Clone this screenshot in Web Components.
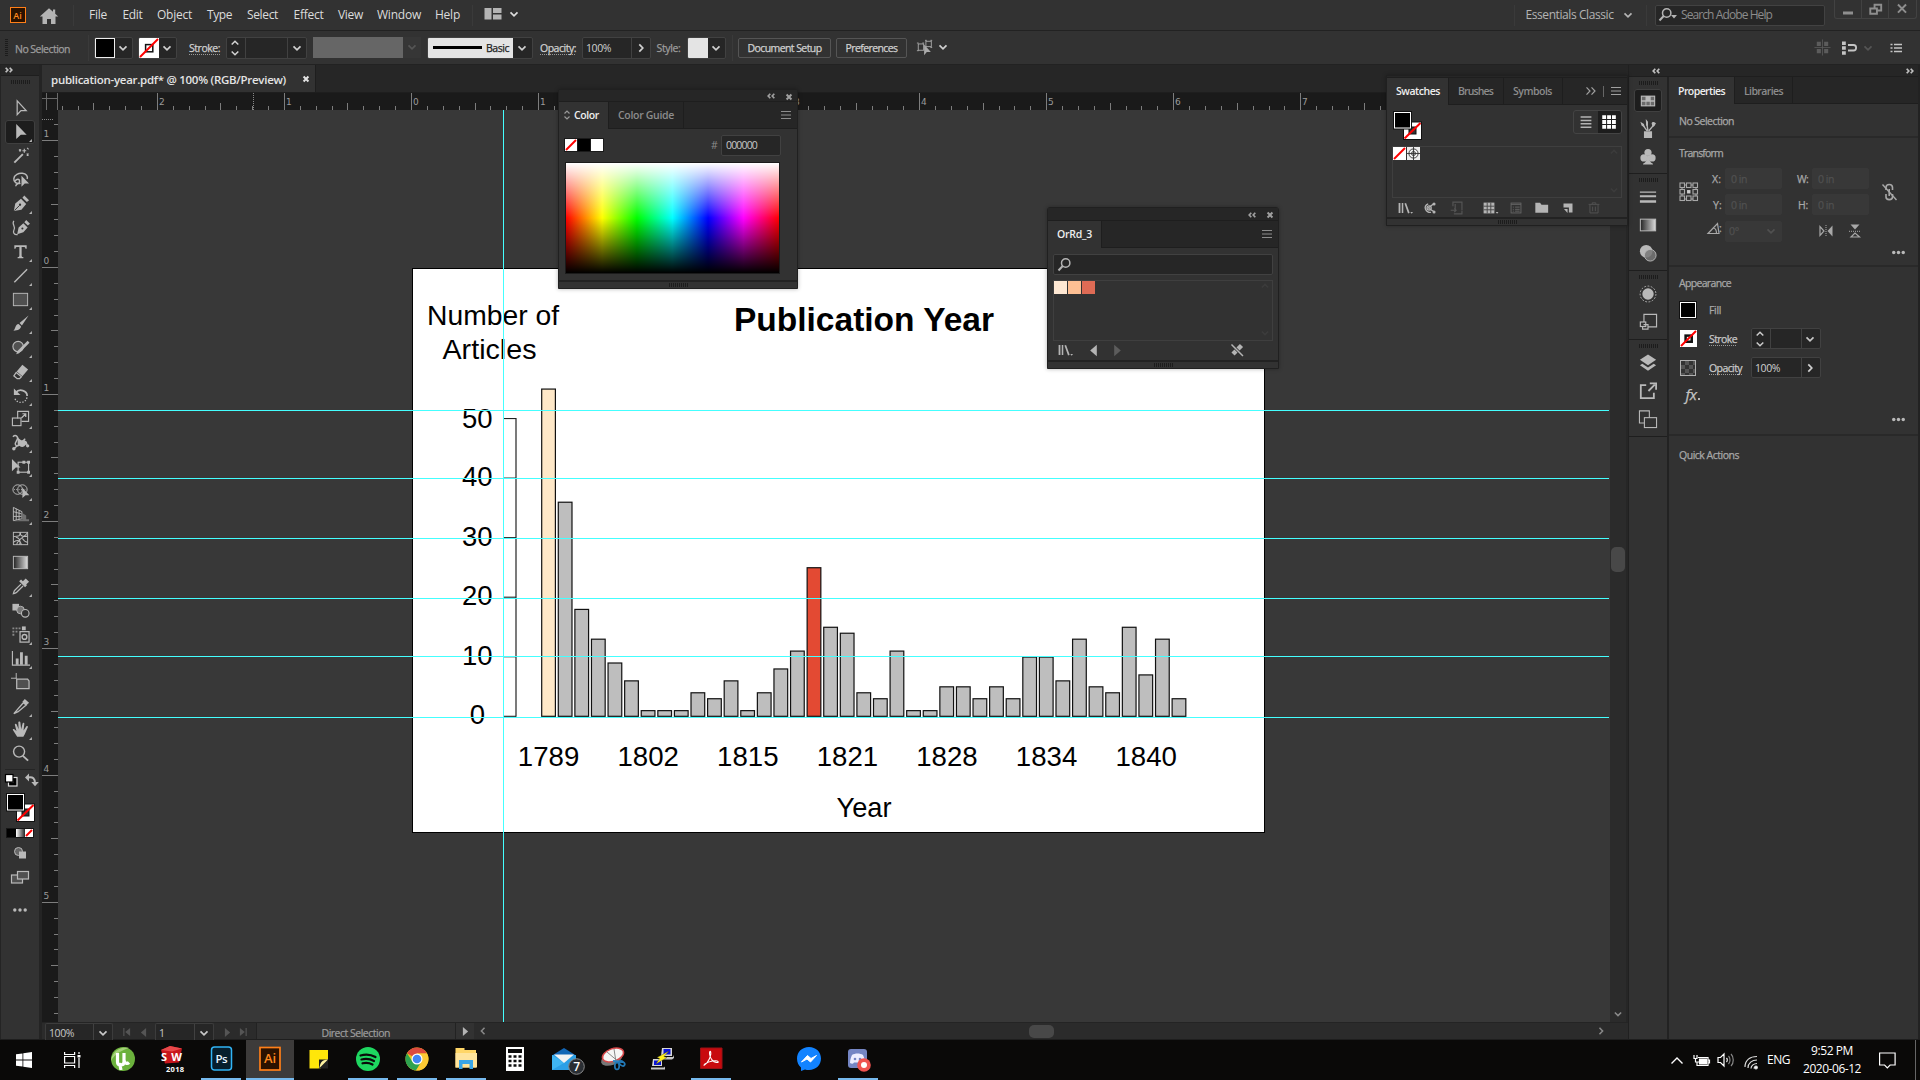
<!DOCTYPE html>
<html lang="en">
<head>
<meta charset="utf-8">
<title>publication-year.pdf</title>
<style>
html,body{margin:0;padding:0;background:#323232;overflow:hidden}
body{width:1920px;height:1080px;font-family:"Open Sans","Noto Sans",sans-serif;font-size:10.5px;color:#b4b4b4}
</style>
</head>
<body>
<ai-app></ai-app>
<script>
const BASE = `*{box-sizing:border-box}
.row{display:flex;align-items:stretch}
.col{display:flex;flex-direction:column}
.c{display:flex;align-items:center;min-width:0;flex:none}
.v{display:flex;flex:none;min-height:0}
svg{display:block;overflow:visible}`;

// A row of cells: each cell runs from its own start to the next cell's start.
const cells = (start, items, end) => {
  const first = items[0][0] - start;
  return `<div class="row" style="flex:1;padding-left:${first}px">` + items.map((it, i) => {
    const next = i + 1 < items.length ? items[i + 1][0] : (end || it[0] + 60);
    return `<div class="c" style="width:${next - it[0]}px;${it[2] || ''}">${it[1]}</div>`;
  }).join('') + '</div>';
};
// The same idea, top to bottom.
const stack = (start, items, end) =>
  `<div class="col" style="flex:1;padding-top:${items[0][0] - start}px">` + items.map((it, i) => {
    const next = i + 1 < items.length ? items[i + 1][0] : (end || it[0] + 30);
    return `<div class="v" style="height:${next - it[0]}px;${it[2] || ''}">${it[1]}</div>`;
  }).join('') + '</div>';

const define = (name, css, html) => customElements.define(name, class extends HTMLElement {
  connectedCallback() {
    if (this.shadowRoot) return;
    this.attachShadow({ mode: 'open' }).innerHTML =
      `<style>${BASE}${css}</style>` + (typeof html === 'function' ? html(this) : html);
  }
});

// Text label fitted to a given width through letter spacing.
customElements.define('ui-label', class extends HTMLElement {
  connectedCallback() {
    if (this.shadowRoot) return;
    this.attachShadow({ mode: 'open' }).innerHTML =
      `<style>:host{display:inline-block;white-space:pre;line-height:14px;height:14px;flex:none}
       :host([dotted]){background:repeating-linear-gradient(90deg,#999 0 1px,transparent 1px 2px) 0 100%/100% 1px no-repeat}
       :host([b]){font-weight:600}</style><span><slot></slot></span>`;
    const w = +this.getAttribute('w');
    if (w) {
      const s = this.shadowRoot.querySelector('span');
      const nat = s.getBoundingClientRect().width;
      s.style.letterSpacing = ((w - nat) / this.textContent.length) + 'px';
      this.style.width = w + 'px';
    }
  }
});
const L = (t, w, style = '', attr = '') => `<ui-label w="${w}" ${attr} style="${style}">${t}</ui-label>`;

const ST = 'fill="none" stroke="currentColor"';
const F = 'fill="currentColor"';
const CORNER = '<path d="M22 21v-3l-3 3z" fill="currentColor"/>';
const ICONS = {
  select: `<path d="M6.5 3v14.5l4-4.2h5.5z" ${ST} stroke-width="1.3"/>`,
  direct: `<path d="M5.5 2v16l4.8-4.6h6.2z" ${F}/>${CORNER}`,
  wand: `<path d="M3.5 17.5L12.5 8.5" ${ST} stroke-width="2"/><path d="M14 3v4M12 5h4M8.500 3.500l2 2M10.500 3.500l-2 2M16.500 8l2 2M18.500 8l-2 2M17 2l1.500 1.500" ${ST} stroke-width="1.200"/>`,
  lasso: `<path d="M10 14c-4 1-7.500-1-7-5 .5-4 5-6 9-5.500 4 .5 6 3 5 6M4 12c2-3 5-3 5 0s-4 2-4 5" ${ST} stroke-width="1.500"/><path d="M11 6v11.500l3.500-3.300h4.500z" ${F}/>`,
  pen: `<path d="M3 18l1.500-8 6-5 5.500 5.500-5 6zM12 4l2-2.500 5 5-2.300 2z" ${F}/><path d="M3.500 17.500l5.500-5.500" stroke="#323232" fill="none"/><circle cx="9.500" cy="11.300" r="1.200" fill="#323232"/>${CORNER}`,
  curve: `<path d="M6.500 17l1.500-7 5-4.500 4.500 4.500-4.500 5zM14 4.500l2-2.500 4 4-2.300 2z" ${F}/><path d="M3 3c-3 4 3 6 0 10-1 2 0 5 4 4.500" ${ST} stroke-width="1.300"/><circle cx="12" cy="11" r="1.100" fill="#323232"/>`,
  type: `<path d="M3.500 3.500h13v3.700h-1.300c0-1.500-.5-2-2-2H11.200V14.500c0 1 .5 1.300 1.800 1.300v1.200H7v-1.200c1.300 0 1.800-.3 1.800-1.300V5.200H6.800c-1.500 0-2 .5-2 2H3.500z" ${F}/>${CORNER}`,
  line: `<path d="M3.500 17L17 3.500" ${ST} stroke-width="1.500"/>${CORNER}`,
  rect: `<rect x="2.500" y="3.500" width="15" height="13" fill="#505050" stroke="currentColor"/>${CORNER}`,
  brush: `<path d="M18.500 1.500L9 9.500l2.500 2.500zM8 10.500l2.500 2.500c0 3-3 4.500-8 4.500 2.500-1.500 1.500-6.500 5.500-7z" ${F}/>${CORNER}`,
  shaper: `<circle cx="7.500" cy="9" r="5.500" fill="#505050" stroke="currentColor" stroke-width="1.200"/><path d="M19.500 5L8.500 16l-3 1 1-3L17.500 3z" ${F}/>${CORNER}`,
  eraser: `<path d="M12 3l6 5-6 7-6-5z" ${F}/><path d="M5.500 11l5.500 4.500-2 2H6.500L3 14.500z" ${ST} stroke-width="1.300"/>${CORNER}`,
  rotate: `<path d="M5 7c4-5 12-2 12 3.500" ${ST} stroke-width="1.800"/><path d="M3 2.500v7h7z" ${F}/><path d="M16.800 12c-1 7-12 7-13 0" ${ST} stroke-width="1.300" stroke-dasharray="1.500 1.500"/>${CORNER}`,
  scale: `<path d="M7 10V2.500h11.500V13H11" ${ST} stroke-width="1.200"/><rect x="1.500" y="9.500" width="9" height="8" ${ST} stroke-width="1.200"/><path d="M11 9.500l4-4M12 5h3.500v3.500" ${ST} stroke-width="1.300"/>${CORNER}`,
  width: `<path d="M2 4c3-3 6 0 4.500 3S3 12 6 13.500 12 8 15 9s0 5 4 4.500M3 16.500L15 6" ${ST} stroke-width="1.500"/><path d="M7 4c2 3 4 5 7 3l3 4-3 3c-3 2-6-1-7-3z" ${F}/><circle cx="3" cy="16.500" r="1.800" ${F}/><circle cx="17.500" cy="13.500" r="1.700" ${F}/>${CORNER}`,
  free: `<path d="M1 2v13l4-4h5z" ${F}/><rect x="7.500" y="5.500" width="11" height="10.500" ${ST} stroke-width="1.200"/><path d="M6 14.500h3v3H6zM17 4h3v3h-3zM17 14.500h3v3h-3zM12 4h3v3h-3z" ${F}/>${CORNER}`,
  shapeb: `<circle cx="7" cy="9" r="5" ${ST}/><circle cx="12" cy="9" r="5" ${ST}/><path d="M3 9h13" ${ST} stroke-dasharray="1 1.500"/><path d="M12 7v11l3.300-3h4z" ${F}/>${CORNER}`,
  persp: `<path d="M2.500 2.500v14l9-2V7zM5.500 4v12M8.500 5.500V15M2.500 7l9 2.500M2.500 12l9 0" ${ST}/><path d="M11 8l5 3v4h-5zM13 15h6v2h-16z" fill="#707070"/>${CORNER}`,
  mesh: `<rect x="2.500" y="3.500" width="15" height="13" ${ST}/><path d="M2.500 8c5-1 7 1 7-4.500M2.500 14c6-5 9 2 8 2.500M10 3.500c-1 4 3 5 7.500 4M9 16.500c2-5-1-7-4-8M12 10c2 3 4 4 5.500 4M6 16.500c1-6 7-7 11-12" ${ST} stroke-width="1.100"/>`,
  grad: `<rect x="2.500" y="3.500" width="15" height="13" fill="url(#g)" stroke="currentColor"/>`,
  dropper: `<path d="M12.500 4.500l3-3 3.500 3.500-3 3 .8.800-2 2-6.200-6.200 2-2z" ${F}/><path d="M10.500 7.500L4 14c-1 1-1 2-1.500 3.500C4 17 5 17 6 16l6.700-6.500" ${ST} stroke-width="1.300"/>${CORNER}`,
  blend: `<path d="M1.500 3h7v7h-7z" ${F}/><circle cx="10" cy="9.500" r="4" fill="#777" stroke="currentColor"/><circle cx="15" cy="13" r="4" fill="#323232" stroke="currentColor" stroke-width="1.200"/>`,
  spray: `<path d="M1.500 2.500h2v2h-2zM4.800 2.500h2v2h-2zM8 2.500h2v2H8zM1.500 6h2v2h-2zM4.800 6h2v2h-2zM1.500 9.300h2v2h-2z" fill="#888"/><rect x="9.500" y="7" width="9.500" height="11" ${ST} stroke-width="1.300"/><path d="M11.500 1.500h4v4h-4z" ${F}/><circle cx="14.200" cy="12.500" r="2.500" ${ST} stroke-width="1.500"/>${CORNER}`,
  graph: `<path d="M1.500 2v15H20" ${ST} stroke-width="1.200"/><path d="M5 10h3v6.500H5zM9.500 3.500h3v13h-3zM14.500 7h3v9.500h-3z" ${F}/>${CORNER}`,
  artb: `<path d="M5.500 0v6M0 5.500h6" ${ST}/><path d="M6 6.500h11.500l1.500 2v8H6z" fill="#505050" stroke="currentColor" stroke-width="1.300"/>`,
  slice: `<path d="M3 17.500L13 6l3 2.500-8.500 7z" ${ST} stroke-width="1.400"/><path d="M12 5l2.500-3 4.500 4-2.700 2.800z" ${F}/>${CORNER}`,
  hand: `<path d="M6.500 17.500L2 10.500c-.5-1.300 1-1.500 2-.5l1.800 1.800L4 4.800c0-1.300 1.500-1.300 2 0l2 5-.3-7c0-1.500 2-1.500 2.200 0l.8 7 1.500-6c.3-1.300 2-1 1.800.3L13.200 11l3-4.300c.8-1 2 0 1.500 1L14.500 15l-1.500 2.500z" ${F}/>${CORNER}`,
  zoom: `<circle cx="8.500" cy="8" r="5.800" ${ST} stroke-width="1.500"/><path d="M12.500 12.500l5.500 5" ${ST} stroke-width="2"/>`,
  chev: `<path d="M6.500 8.300l3.500 3.500 3.500-3.500" ${ST} stroke-width="1.700"/>`,
  chevr: `<path d="M8.300 6.300l3.500 3.700-3.500 3.700" ${ST} stroke-width="1.700"/>`,
  spin: `<path d="M6.700 6.500L10 3.300l3.300 3.200M6.700 13.500l3.300 3.200 3.300-3.200" ${ST} stroke-width="1.600"/>`,
  dbll: `<path d="M9.300 7.700L7.200 10l2.100 2.300M13.300 7.700L11.200 10l2.100 2.300" ${ST} stroke-width="1.700"/>`,
  dblr: `<path d="M6.700 7.700L8.800 10l-2.100 2.300M10.700 7.700L12.800 10l-2.100 2.300" ${ST} stroke-width="1.700"/>`,
  dblbig: `<path d="M5.500 6.300L9 10l-3.500 3.700M10.500 6.300L14 10l-3.500 3.700" ${ST} stroke-width="1.200"/>`,
  close: `<path d="M7.300 7.300l5.400 5.400M12.700 7.300l-5.400 5.400" ${ST} stroke-width="2.200"/>`,
  menu: `<path d="M5 6.500h10M5 10h10M5 13.500h10" ${ST} stroke-width="1.200"/>`,
  home: `<path d="M10 2.200L.8 10.500h2.700V18H8v-5h4v5h4.500v-7.500h2.700l-3-2.800V3.500H14v2.300z" ${F}/>`,
  layout: `<path d="M1.500 4h7v11.500h-7zM10 4h8.500v5H10zM10 10.500h8.500v5H10z" ${F}/>`,
  search: `<circle cx="11.700" cy="8" r="4.200" ${ST} stroke-width="1.500"/><path d="M8.700 11L4.500 15.500" ${ST} stroke-width="2"/>`,
  isol: `<rect x="2.500" y="5.500" width="6" height="7" ${ST}/><rect x="11" y="2.500" width="6" height="6" ${ST}/><path d="M1 4.500h2M7 4.500h2M1 13h2M10 1.500h2M16 1.500h2M16 9.500h2" ${ST}/><path d="M9 6v12l3-3.500h4.500z" ${F}/>`,
  align4: `<path d="M4 4h4.300v4.300H4zM11.700 4H16v4.300h-4.300zM4 11.700h4.300V16H4zM11.700 11.700H16V16h-4.300z" ${F}/><path d="M10 1.500v17M1.500 10h17" ${ST} stroke-width=".8"/>`,
  snap: `<path d="M3 3.500h3.800v3.500H3zM3 8.300h3.800v3.500H3zM3 13.200h3.800v3.500H3z" ${F}/><path d="M9 7h5.500c3.500 0 3.500 5.500 0 5.500H9" ${ST} stroke-width="1.800"/>`,
  list: `<path d="M4.500 6.500h2M8 6.500h8M4.500 10h2M8 10h8M4.500 13.500h2M8 13.500h8" ${ST} stroke-width="1.300"/>`,
  swp: `<rect x="2" y="4" width="16" height="12" ${F}/><path d="M3.200 5.200h4v4h-4zM13 5.200h3.800v4H13zM3.200 10.700h4v4h-4zM8.200 10.700h3.800v4H8.200zM13 10.700h3.800v4H13z" fill="#6a6a6a"/>`,
  brushes: `<path d="M5.500 12.500h9v7.500h-9z" ${F}/><path d="M9 12L4.500 6M10 12L8.500 3M11 12l5-6" ${ST} stroke-width="1.500"/><path d="M1.500 2l4 2.500 1 3.500-3.500-1.500zM7.500-1l2.500 3v4.500h-2zM14 3.500c1-2 2.500-1 5 0-1 .5-1 4-4 4z" ${F}/>`,
  club: `<circle cx="10" cy="5" r="4" ${F}/><circle cx="5.500" cy="11" r="4" ${F}/><circle cx="14.500" cy="11" r="4" ${F}/><path d="M9 9h2.200c0 4 .8 7 4.300 8.500v.8H4.500v-.8C8 16 9 13 9 9z" ${F}/>`,
  strokes: `<path d="M1 4h18v1.200H1zM1 8h18v2.300H1zM1 13.500h18v3H1z" ${F}/>`,
  grads: `<rect x="1.500" y="3.500" width="17" height="13" fill="url(#g)" stroke="currentColor" stroke-width="1.100"/>`,
  transp: `<circle cx="8" cy="8" r="7" ${F}/><circle cx="12.500" cy="12.500" r="6.500" fill="#777" stroke="#b9b9b9" stroke-width="1" fill-opacity=".85"/>`,
  appear: `<circle cx="10" cy="10" r="6.300" ${F}/><circle cx="10" cy="10" r="8.800" ${ST} stroke-dasharray="2 1.700"/>`,
  gstyle: `<path d="M5.500 10V1.500h14v14H10" ${ST} stroke-width="1.300"/><rect x="1.500" y="10" width="6" height="5" fill="#323232" stroke="currentColor" stroke-width="1.300"/><path d="M5 13h5v5H4V15" ${ST} stroke-width="1.300"/>`,
  layers: `<path d="M10 .5l9 6-9 6-9-6z" ${F}/><path d="M1 12.500l9 6 9-6-2.700-1.700-6.300 4.200-6.300-4.200z" ${F}/>`,
  exp: `<path d="M8 3.500H2V18h14.500V12" ${ST} stroke-width="2"/><path d="M10.500 10l7-7M12 1.500h7v7" ${ST} stroke-width="2"/>`,
  artbs: `<path d="M6 14.500H.5V1h11v7.500" ${ST} stroke-width="1.200"/><rect x="6" y="8.500" width="13.500" height="11" ${ST} stroke-width="1.200"/>`,
  lib: `<path d="M4 4.500h2v11H4zM7.500 4.500h1.700v11H7.500zM10.500 5l1.800-.6 4 11-1.800.6z" ${F}/><path d="M17 14.500h3l-1.500 1.800z" ${F}/>`,
  kuler: `<path d="M8 10l6.500-5M8 10l7 4.500M8 5.500C5 6.500 4 9 5 11.500s4 4 6 3" ${ST} stroke-width="1.500"/><circle cx="9" cy="10" r="2.300" ${ST} stroke-width="1.500"/><circle cx="14.500" cy="5.500" r="1.700" ${F}/><circle cx="14.500" cy="14.500" r="1.700" ${F}/>`,
  addlib: `<path d="M5.500 8V3.500h10v9M8 12V5.500M3 12.500h6M7 10.500l2 2-2 2M6.500 16.500h9v-3.500" ${ST} stroke-width="1.300"/>`,
  kinds: `<path d="M4 4h12v12H4z" ${F}/><path d="M4 8h12M4 12h12M8 4v12M12 4v12" stroke="#444"/><path d="M17.500 14.500h3l-1.500 1.800z" ${F}/>`,
  opts: `<rect x="4.500" y="4.500" width="11" height="11" ${ST}/><path d="M4.500 6h11M6.500 9h1M9 9h5M6.500 11.500h1M9 11.500h5M6.500 13.500h1M9 13.500h5" ${ST}/>`,
  folder: `<path d="M3.500 5h5l1.500 2h7v8.500H3.500z" ${F}/>`,
  page: `<path d="M5 5h10v10h-4V9.500H5z" ${F}/><path d="M5.500 11H9.500v4.500z" ${F}/>`,
  trash: `<path d="M5.500 6.500v9h9v-9M4 6h12M8 5.500V4.300h4v1.200M8.500 8.500v5M11.500 8.500v5" ${ST}/>`,
  left: `<path d="M13.500 4v12L6.500 10z" ${F}/>`,
  right: `<path d="M6.500 4v12l7-6z" ${F}/>`,
  editx: `<path d="M6 14L14.500 5.500" ${ST} stroke-width="4.500"/><path d="M4.500 4.500l11.500 11.500" stroke="#323232" stroke-width="3"/><path d="M4.500 4.500l11.500 11.500" ${ST} stroke-width="1.500"/>`,
  refpt: `<path d="M3 3h14v14H3z" ${ST}/>` + [1.5, 8, 14.5].map(a => [1.5, 8, 14.5].map(b => `<rect x="${a - .5}" y="${b - .5}" width="4.500" height="4.500" fill="${a == 8 && b == 8 ? '#ccc' : '#323232'}" stroke="${a == 8 && b == 8 ? '#323232' : 'currentColor'}" stroke-width="1.100"/>`).join('')).join(''),
  link: `<path d="M7 8V5.500c0-4 6.500-4 6.500 0V8M7 12v3c0 3.500 6.500 3.500 6.500 0v-3M10.200 7v7" ${ST} stroke-width="1.600"/><path d="M3.500 2.500L17.500 18" ${ST} stroke-width="1.400"/>`,
  angle: `<path d="M3 15.500L12.500 5.500 14 15.500zM8 10c2.500 0 3.500 2.500 3.500 5.500" ${ST} stroke-width="1.200"/>`,
  fliph: `<path d="M4 5.500v9l4-4.500z" ${ST} stroke-width="1.200"/><path d="M16.500 4.500v11L11.500 10z" ${F}/><path d="M10 4v12" ${ST} stroke-dasharray="1 1"/>`,
  flipv: `<path d="M5.500 3.500h9L10 8.500z" ${F}/><path d="M6 16h8.500L10 12z" ${ST} stroke-width="1.200"/><path d="M4 10.300h12" ${ST} stroke-dasharray="1 1"/>`,
  dots: `<circle cx="5" cy="10" r="1.800" ${F}/><circle cx="10" cy="10" r="1.800" ${F}/><circle cx="15" cy="10" r="1.800" ${F}/>`,
  dotsw: `<circle cx="4.800" cy="10" r="1.700" ${F}/><circle cx="10" cy="10" r="1.700" ${F}/><circle cx="15.200" cy="10" r="1.700" ${F}/>`,
  updown: `<path d="M7.500 8.500L10 6l2.500 2.500M7.500 11.500L10 14l2.500-2.500" ${ST} stroke-width="1.200"/>`,
  deffs: `<rect x="7.500" y="7.500" width="8.500" height="8.500" fill="#000" stroke="#ddd" stroke-width="1.200"/><rect x="10.500" y="10.500" width="2.500" height="2.500" fill="#323232"/><rect x="4.500" y="4.500" width="7.500" height="7.500" fill="#fff" stroke="#000" stroke-width="1.200"/>`,
  swapfs: `<path d="M7 7.500c5-1 7 1 7 6" ${ST} stroke-width="2"/><path d="M8 3.500v8L4 7.500zM10.300 12h7.500L14 16.300z" ${F}/>`,
  drawm: `<circle cx="8.500" cy="8.500" r="4" fill="#666" stroke="currentColor"/><path d="M9 8.500h7v7H9z" ${F}/>`,
  screenm: `<rect x="1.500" y="8" width="11" height="8" fill="#505050" stroke="currentColor" stroke-width="1.200"/><rect x="7.500" y="4.500" width="11" height="7.500" fill="#505050" stroke="currentColor" stroke-width="1.200"/>`,
  viewl: `<path d="M4 4.500h12M4 8.300h12M4 12h12M4 15.800h12" ${ST} stroke-width="1.600"/>`,
  viewg: `<path d="M2.500 2.500h4.300v4.300H2.500zM7.900 2.500h4.300v4.300H7.900zM13.300 2.500h4.300v4.300h-4.300zM2.500 7.900h4.300v4.300H2.500zM7.900 7.900h4.300v4.300H7.900zM13.300 7.900h4.300v4.300h-4.300zM2.500 13.300h4.300v4.300H2.500zM7.900 13.300h4.300v4.300H7.900zM13.300 13.300h4.300v4.300h-4.300z" fill="#fff"/>`,
  min: `<path d="M5 11.500h10v3H5z" ${F}/>`,
  restore: `<path d="M9 9V5h7v6h-4M4.500 9h7v5.500h-7z" ${ST} stroke-width="2"/>`,
  wclose: `<path d="M5.500 5l9 9M14.500 5l-9 9" ${ST} stroke-width="2.200"/>`,
  first: `<path d="M6.500 5.500v9" ${ST} stroke-width="1.300"/><path d="M13.500 5.500v9L8 10z" ${F}/>`,
  last: `<path d="M13.500 5.500v9" ${ST} stroke-width="1.300"/><path d="M6.500 5.500v9L12 10z" ${F}/>`,
};
define('ui-icon', ':host{display:block;flex:none}', el => {
  const s = el.getAttribute('s') || 20;
  return `<svg width="${s}" height="${s}" viewBox="0 0 20 20"><defs><linearGradient id="g"><stop offset="0" stop-color="#222"/><stop offset="1" stop-color="#ddd"/></linearGradient></defs>${ICONS[el.getAttribute('n')]}</svg>`;
});
const I = (n, style = '', s = 20) => `<ui-icon n="${n}" s="${s}" style="${style}"></ui-icon>`;

define('ui-grip', ':host{display:block;width:19px;height:4px;background:repeating-linear-gradient(90deg,#1c1c1c 0 1px,transparent 1px 2px);flex:none}', '');
define('ui-sep', ':host{display:block;width:1px;height:21px;background:#242424;border-right:1px solid #3a3a3a;box-sizing:content-box;flex:none}', '');

// Overlapping fill and stroke indicators
define('fill-stroke', ':host{display:block;flex:none}', `<svg width="29" height="29" viewBox="0 0 29 29">
<rect x="10" y="10.500" width="19" height="18.500" fill="#111"/><rect x="11" y="11.500" width="17" height="16.500" fill="#fff"/><rect x="16" y="16" width="7" height="7" fill="#323232" stroke="#111"/><path d="M11.500 27.500L27.500 12" stroke="#f00" stroke-width="2"/>
<rect x="0" y="0" width="19" height="18.500" fill="#111"/><rect x="1" y="1" width="17" height="16.500" fill="#fff"/><rect x="2" y="2" width="15" height="14.500" fill="#000"/></svg>`);
define('none-swatch', ':host{display:block;flex:none}', el => {
  const s = +el.getAttribute('s') || 13, ring = el.hasAttribute('ring');
  return `<svg width="${s}" height="${s}" viewBox="0 0 ${s} ${s}"><rect width="${s}" height="${s}" fill="#fff"/>${ring ? `<rect x="${s * .33}" y="${s * .33}" width="${s * .36}" height="${s * .36}" fill="#fff" stroke="#111" stroke-width="${el.getAttribute('ring') || 1}"/>` : ''}<path d="M1 ${s - 1}L${s - 1} 1" stroke="#f00" stroke-width="2"/></svg>`;
});
define('ui-field', `:host{display:flex;align-items:center;height:22px;background:#262626;border:1px solid #414141;border-radius:2px;overflow:hidden;flex:none;box-sizing:border-box}
:host([dim]){background:#383838;border-color:#383838;color:#505050}`, '<slot></slot>');

define('menu-bar', `:host{display:flex;height:30px;background:#323232;border-bottom:0;font-size:12px;color:#dcdcdc}
.ai{width:16px;height:16px;border:1.500px solid #ff7f18;background:#2a1200;color:#ff8a1e;font-size:9px;font-weight:600;display:flex;align-items:center;justify-content:center}
.wb{display:flex;width:83px;height:19px;border:1px solid #424242;border-top:0;border-radius:0 0 3px 3px;align-self:flex-start;color:#8e8e8e}
.wb div{flex:1;display:flex;justify-content:center;border-left:1px solid #424242}.wb div:first-child{border:0}
.s{background:#262626;border:1px solid #424242;border-radius:2px;width:170px;height:21px;display:flex;align-items:center;color:#8c8c8c}`,
cells(0, [[9.500, '<div class="ai">Ai</div>'], [39, I('home', 'color:#b4b4b4;margin-top:2px', 20)], [73, '<ui-sep></ui-sep>'],
[89, L('File', 18)], [122.500, L('Edit', 20)], [157, L('Object', 35)], [207, L('Type', 25)], [247, L('Select', 31)], [293.500, L('Effect', 30)], [338, L('View', 25)], [377, L('Window', 44)], [435, L('Help', 25)],
[472, '<ui-sep></ui-sep>'], [482.500, I('layout', 'color:#b4b4b4;margin-top:-2px')], [503.500, I('chev', 'margin-top:-2px')],
[1514, '<ui-sep></ui-sep>'], [1525.500, L('Essentials Classic', 88, 'color:#b4b4b4')], [1618, I('chev', 'color:#b4b4b4')], [1646, '<ui-sep></ui-sep>'],
[1655, `<div class="s">${I('search', 'margin-left:-1px;color:#b4b4b4')}<svg width="6" height="4" style="margin:3px 1px 0 -4px"><path d="M0 0h6L3 3.500z" fill="#b4b4b4"/></svg>${L('Search Adobe Help', 91, 'margin-left:3px')}</div>`],
[1833.500, `<div class="wb"><div>${I('min')}</div><div>${I('restore', 'margin-left:1px', 19)}</div><div>${I('wclose', '', 18)}</div></div>`]], 1920));

define('control-bar', `:host{display:flex;height:35px;background:#323232;border-top:1px solid #222;border-bottom:1px solid #222;font-size:10.500px;color:#d0d0d0;-webkit-text-stroke:.25px}
.g{width:3px;height:18px;background:repeating-linear-gradient(#1c1c1c 0 1px,transparent 1px 2px)}
.k{width:20px;height:20px;border:1px solid #eee;background:#000;flex:none}.w{width:20px;height:20px;background:#e4e4e4;flex:none}
.d{width:1px;align-self:stretch;background:#414141;flex:none}
.b{border:1px solid #555;border-radius:2px;height:20px;display:flex;align-items:center;justify-content:center}
`,
cells(0, [[5, '<div class="g"></div>'], [15, L('No Selection', 55, 'color:#9d9d9d;margin-top:2px')], [88, '<ui-sep style="height:26px"></ui-sep>'],
[94, `<ui-field style="width:39px"><div class="k"></div>${I('chev', 'margin-left:-2px')}</ui-field>`],
[138, `<ui-field style="width:39px"><none-swatch s="20" ring="1.5"></none-swatch>${I('chev', 'margin-left:-2px')}</ui-field>`],
[189, L('Stroke:', 31, 'margin-top:1px', 'dotted')],
[226, `<ui-field style="width:81px">${I('spin', 'margin-left:-2px')}<div class="d"></div><div style="flex:1"></div><div class="d"></div>${I('chev', 'margin:0 -1px')}</ui-field>`],
[313, '<div style="width:90px;height:21px;background:#666"></div>'], [403, `<div style="width:18px;height:21px;background:#363636;color:#555">${I('chev', 'margin-left:-1px')}</div>`],
[427, `<ui-field style="width:106px"><div style="width:86px;height:20px;background:#e4e4e4;color:#222;display:flex;align-items:center;padding-left:5px"><div style="width:49px;height:2.500px;background:#000;margin-right:4px"></div>${L('Basic', 23, 'margin-top:1px')}</div>${I('chev', 'margin-left:-1px')}</ui-field>`],
[540, L('Opacity:', 36, '', 'dotted')],
[582, `<ui-field style="width:69px">${L('100%', 25, 'margin-left:3px;-webkit-text-stroke:0')}<div style="flex:1"></div><div class="d"></div>${I('chevr', 'margin:0 -1px')}</ui-field>`],
[656.500, L('Style:', 24, 'color:#9d9d9d')],
[687, `<ui-field style="width:39px"><div class="w"></div>${I('chev', 'margin-left:-2px')}</ui-field>`], [732, '<ui-sep style="height:26px"></ui-sep>'],
[738, `<div class="b" style="width:93px">${L('Document Setup', 74, 'margin-top:1px')}</div>`], [836, `<div class="b" style="width:71px">${L('Preferences', 52, 'margin-top:1px')}</div>`],
[916, I('isol', 'color:#aaa', 18)], [933, I('chev', 'margin-top:-1px')],
[1813, I('align4', 'color:#5c5c5c', 19)], [1839, I('snap', 'color:#c4c4c4')], [1858, I('chev', 'color:#555')], [1886, I('list', 'color:#c4c4c4')]], 1920));

const TOOLS = 'select direct wand lasso pen curve type line rect brush shaper eraser rotate scale width free shapeb persp mesh grad dropper blend spray graph artb slice hand zoom'.split(' ');
define('tool-rail', `:host{display:flex;flex-direction:column;width:42px;height:974px;background:#323232;border-left:1px solid #242424;border-right:3px solid #242424;color:#b9b9b9;align-items:center}
.h{height:11px;align-self:stretch;background:#262626;border-bottom:1px solid #1e1e1e;display:flex;align-items:center}
.t{height:23.930px;width:30px;flex:none;display:flex;align-items:center;justify-content:center;border-radius:3px}
.on{background:#1d1d1d;box-shadow:inset 0 0 0 1px #3f3f3f}`,
`<div class="h">${I('dblr', 'margin-left:-2px;color:#c0c0c0')}</div><ui-grip style="margin:4px 0 12px"></ui-grip>` +
TOOLS.map((t, i) => `<div class="t${i == 1 ? ' on' : ''}">${I(t, '', 19)}</div>`).join('') +
`<div style="width:30px;height:1px;background:#252525;margin-top:3px;flex:none"></div>
<div class="row" style="height:21px;gap:0;align-items:center;justify-content:space-between;width:38px">${I('deffs')}${I('swapfs', 'margin-right:-1px')}</div>
<fill-stroke style="margin-top:2px"></fill-stroke>
<div class="row" style="margin-top:6px;border:1px solid #161616;flex:none"><div style="width:9px;height:8px;background:#000"></div><div style="width:9px;height:8px;background:linear-gradient(90deg,#fff,#222)"></div><none-swatch s="8"></none-swatch></div>
<div style="margin-top:5px">${I('drawm')}</div><div style="margin-top:4px">${I('screenm')}</div><div style="margin-top:13px">${I('dotsw')}</div>`);

const RULE = '#7d7d7d';
const hr = () => {
  let s = '';
  for (let k = -24; k <= 62; k++) {
    const x = Math.floor(411.5 + k * 15.88 - 58) + .5, n = Math.abs(k / 8);
    if (x < 0 || x > 1567) continue;
    s += `<path d="M${x} ${k % 8 == 0 ? 0 : k % 4 == 0 ? 10 : 13}V17" stroke="${RULE}"/>`;
    if (k % 8 == 0) s += `<text x="${x + 1.5}" y="11.500">${n}</text>`;
  }
  return s;
};
const vr = () => {
  let s = '';
  for (let k = -9; k <= 47; k++) {
    const y = Math.floor(267.5 + k * 15.87 - 110) + .5;
    if (y < 0 || y > 912) continue;
    s += `<path d="M${k % 8 == 0 ? 0 : k % 4 == 0 ? 9 : 12} ${y}H16" stroke="${RULE}"/>`;
    if (k % 8 == 0) s += `<text x="1.500" y="${y - 3.5}">${Math.abs(k / 8)}</text>`;
  }
  return s;
};
const DATA = [55,36,18,13,9,6,1,1,1,4,3,6,1,4,8,11,25,15,14,4,3,11,1,1,5,5,3,5,3,10,10,6,13,5,4,15,7,13,3];
define('bar-chart', ':host{display:block}text{font-family:"Liberation Sans",Arial,sans-serif;fill:#000}', () => {
  const Y0 = 716.3, U = 5.955;
  const T = (x, y, w, t, fs, extra = '') => `<text x="${x}" y="${y}" text-anchor="middle" font-size="${fs}" ${w ? `textLength="${w}" lengthAdjust="spacingAndGlyphs"` : ''} ${extra}>${t}</text>`;
  let s = '<rect x="412.500" y="268.500" width="852" height="564" fill="#fff" stroke="#000"/>';
  s += T(493, 325, 132, 'Number of', 28.5) + T(489.5, 358.6, 94, 'Articles', 28.5) + T(864, 330.7, 260, 'Publication Year', 33.5, 'font-weight="700"');
  [[50, 428], [40, 486], [30, 546], [20, 604.5], [10, 664.5], [0, 724]].forEach(([n, y]) => {
    s += T(477.3, y, 0, n, 27.5);
    s += `<path d="M503 ${Y0 - n * U}H516" stroke="#222" stroke-width="1.100"/>`;
  });
  s += `<path d="M516 ${Y0 - 50 * U - .5}V${Y0 + .5}" stroke="#222" stroke-width="1.200"/>`;
  DATA.forEach((v, i) => {
    s += `<rect x="${541.7 + i * 16.59}" y="${Y0 - v * U + .3}" width="13.700" height="${v * U - .3}" fill="${i == 0 ? '#fee8c8' : i == 16 ? '#e34a33' : '#bebebe'}" stroke="#111" stroke-width="1.200"/>`;
  });
  [1789, 1802, 1815, 1821, 1828, 1834, 1840].forEach((n, i) => s += T(548.6 + i * 99.6, 766, 61.5, n, 27.5));
  s += T(864, 817, 55, 'Year', 28);
  [410, 478, 538, 598, 656, 717].forEach(y => s += `<rect x="58" y="${y}" width="1551" height="1" fill="#4ff"/>`);
  s += '<rect x="503" y="110" width="1" height="912" fill="#4ff"/>';
  return `<svg width="1552" height="913" viewBox="58 110 1552 913">${s}</svg>`;
});

define('doc-window', `:host{display:flex;flex-direction:column;width:1586px;height:974px;background:#262626}
.tabs{height:28px;display:flex;border-bottom:1px solid #1e1e1e}
.tab{width:274px;background:#323232;display:flex;align-items:center;padding-left:9px;color:#e4e4e4;font-size:11.500px;border-right:1px solid #1e1e1e}
.rul{background:#1a1a1a}
text{font-family:"DejaVu Sans",sans-serif;font-size:9px;fill:#9a9a9a}
.st{height:17px;background:#2b2b2b;display:flex;color:#c8c8c8;border-top:1px solid #242424}
.f{background:#262626;border:1px solid #3c3c3c;border-bottom:0;display:flex;align-items:center;height:17px;border-radius:2px 2px 0 0}
.d{width:1px;align-self:stretch;background:#414141}`,
`<div class="tabs"><div class="tab">${L('publication-year.pdf* @ 100% (RGB/Preview)', 235, 'margin-top:2px', 'b')}${I('close', 'margin:1px 0 0 11px', 18)}</div></div>
<div class="row rul" style="height:17px"><svg width="16" height="17"><path d="M4.500 0v17M0 5.500h16M15.500 0v17" stroke="#6a6a6a"/></svg><svg width="1568" height="17">${hr()}<path d="M195.500 0v17" stroke="#888" stroke-dasharray="1 1"/></svg></div>
<div class="row" style="height:912px"><svg class="rul" width="16" height="912">${vr()}<path d="M0 9.500h12" stroke="#888" stroke-dasharray="1 1"/></svg>
<bar-chart style="background:#383838;height:912px;width:1552px;overflow:hidden"></bar-chart>
<div class="col" style="width:16px;background:#2b2b2b;align-items:center;justify-content:space-between"><div style="width:14px;height:25px;border-radius:5px;background:#484848;margin-top:437px"></div>${I('chev', 'color:#8a8a8a;margin-bottom:-1px', 18)}</div></div>
<div class="st">` + cells(42, [[45, `<div class="f" style="width:68px">${L('100%', 25, 'margin:3px 0 0 3px')}<div style="flex:1"></div><div class="d"></div>${I('chev', 'margin:2px -1px 0')}</div>`],
[118, I('first', 'color:#555;margin-top:2px', 18)], [136, I('left', 'color:#555;margin-top:2px', 15)],
[155, `<div class="f" style="width:59px">${L('1', 5, 'margin:3px 0 0 3px')}<div style="flex:1"></div><div class="d"></div>${I('chev', 'margin:2px -1px 0')}</div>`],
[219.500, I('right', 'color:#555;margin-top:2px', 15)], [234, I('last', 'color:#555;margin-top:2px', 18)],
[256, L('Direct Selection', 68.5, 'margin:3px 0 0 64.500px;color:#9d9d9d;-webkit-text-stroke:.2px'), 'background:#323232;border-left:1px solid #222'],
[455, I('right', 'color:#b4b4b4;margin:1px 0 0 2px', 15), 'background:#323232;border-left:1px solid #222'], [474, I('chevr', 'color:#888;transform:scaleX(-1)', 18)],
[1029, '<div style="width:25px;height:13px;border-radius:5px;background:#484848"></div>'], [1592, I('chevr', 'color:#888', 18)]], 1628) + '</div>');

define('icon-strip', `:host{display:flex;flex-direction:column;width:41px;height:974px;background:#323232;border-left:1px solid #202020;border-right:2px solid #222;color:#b9b9b9;align-items:stretch}
.h{height:12px;background:#262626;border-bottom:1px solid #1e1e1e;display:flex;align-items:center;justify-content:flex-end;flex:none;margin-right:-2px}
.g{display:flex;flex-direction:column;align-items:center;border-bottom:1px solid #1e1e1e;padding-top:4px;flex:none}
.i{height:28px;width:28px;display:flex;align-items:center;justify-content:center;flex:none}
.on{background:#1d1d1d;box-shadow:inset 0 0 0 1px #404040;border-radius:3px;height:23px;margin:2px 0 3px}`,
`<div class="h">${I('dbll', 'margin-right:3px;color:#c0c0c0')}</div>` +
[[['swp', 'brushes', 'club'], 97], [['strokes', 'grads', 'transp'], 97], [['appear', 'gstyle'], 69], [['layers', 'exp', 'artbs'], 97]].map(([a, h], gi) =>
`<div class="g" style="height:${h}px"><ui-grip style="margin-bottom:${gi ? 1 : 2}px"></ui-grip>${a.map(n => `<div class="i${n == 'swp' ? ' on' : ''}">${I(n, '', 18)}</div>`).join('')}</div>`).join(''));

define('props-panel', `:host{display:flex;flex-direction:column;width:251px;height:974px;background:#323232;border-right:2px solid #222;color:#a8a8a8;font-size:10.500px;-webkit-text-stroke:.25px}
.h{height:12px;background:#262626;border-bottom:1px solid #1e1e1e;display:flex;align-items:center;justify-content:flex-end;flex:none}
.tabs{height:27px;display:flex;background:#262626;flex:none}
.tab{display:flex;align-items:center;border-right:1px solid #1e1e1e;border-bottom:1px solid #1e1e1e;color:#8c8c8c;-webkit-text-stroke:0}
.tab.on{background:#323232;color:#eee;border-bottom:0}
hr{border:0;height:2px;background:#292929;margin:0;flex:1}
.d{width:1px;align-self:stretch;background:#414141;flex:none}`,
`<div class="h">${I('dblr', 'margin-right:-2px;color:#c0c0c0')}</div><div class="tabs"><div class="tab on" style="width:66px;padding-left:9px">${L('Properties', 47, 'margin-top:1px', 'b')}</div><div class="tab" style="width:58px;padding-left:9px">${L('Libraries', 39, 'margin-top:1px', 'b')}</div><div style="flex:1;border-bottom:1px solid #1e1e1e"></div></div>` +
stack(104, [[114, L('No Selection', 55, 'margin-left:10px')], [136, '<hr>'], [146, L('Transform', 44, 'margin-left:10px')],
[168, cells(1669, [[1712, L('X:', 9)], [1725, '<ui-field dim style="width:57px;height:21px">' + L('0 in', 16, 'margin-left:5px') + '</ui-field>'], [1797, L('W:', 11)], [1812, '<ui-field dim style="width:57px;height:21px">' + L('0 in', 16, 'margin-left:5px') + '</ui-field>']], 1880), 'height:21px;margin-bottom:-3px'],
[186, cells(1669, [[1679, I('refpt')], [1879, I('link')]], 1915), 'height:12px;margin-bottom:-4px'],
[194, cells(1669, [[1713, L('Y:', 9)], [1725, '<ui-field dim style="width:57px;height:21px">' + L('0 in', 16, 'margin-left:5px') + '</ui-field>'], [1798, L('H:', 10)], [1812, '<ui-field dim style="width:57px;height:21px">' + L('0 in', 16, 'margin-left:5px') + '</ui-field>']], 1880), 'height:21px;margin-bottom:5px'],
[220, cells(1669, [[1705, I('angle', 'margin-top:-6px')], [1719, L(':', 3, 'margin-top:-6px')], [1725, '<ui-field dim style="width:57px;height:21px">' + L('0°', 10, 'margin-left:3px') + I('chev', 'margin-left:22px') + '</ui-field>'], [1815.5, I('fliph')], [1844.5, I('flipv')]], 1880), 'height:22px;margin-bottom:0'],
[242, I('dots', 'margin:1px 0 0 219.500px;color:#b9b9b9', 19)], [265, '<hr>'], [276, L('Appearance', 52, 'margin-left:10px')],
[301, '<div style="margin-left:10px;width:18px;height:18px;background:#000;border:1px solid #111;box-shadow:inset 0 0 0 1px #fff"></div>' + L('Fill', 12, 'margin:2px 0 0 12px')],
[328, cells(1669, [[1679.5, '<none-swatch s="17" ring="2.5"></none-swatch>'], [1709, L('Stroke', 28, 'color:#c8c8c8', 'dotted')], [1751, `<ui-field style="width:70px;height:21px;color:#c8c8c8">${I('spin', 'margin-left:-2px')}<div class="d"></div><div style="flex:1"></div><div class="d"></div>${I('chev', 'margin:0 0 0 -2px')}</ui-field>`]], 1880), 'height:21px;margin-bottom:8px'],
[357, cells(1669, [[1680, '<div style="width:16px;height:16px;border:1px solid #b0b0b0;background:repeating-conic-gradient(#555 0 25%,#333 0 50%) 0 0/8px 8px"></div>'], [1709, L('Opacity', 33, 'color:#c8c8c8', 'dotted')], [1751, `<ui-field style="width:70px;height:21px;color:#d0d0d0">${L('100%', 25, 'margin-left:3px;-webkit-text-stroke:0')}<div style="flex:1"></div><div class="d"></div>${I('chevr', 'margin:0 0 0 -2px')}</ui-field>`]], 1880), 'height:21px;margin-bottom:8px'],
[386, L('fx', 11, "margin-left:16.500px;font:italic 15px/16px 'Open Sans';color:#c4c4c4") + '<div style="width:2px;height:2px;background:#bbb;margin:12px 0 0 1px"></div>'],
[410, I('dots', 'margin-left:219.500px;color:#b9b9b9', 19)], [434, '<hr>'], [448, L('Quick Actions', 60, 'margin-left:10px')]]));

// Free-floating palette; tabs and body are passed in by slot.
define('float-panel', `:host{display:flex;flex-direction:column;position:absolute;background:#323232;border:1px solid #202020;box-shadow:0 0 4px rgba(0,0,0,.3);color:#8c8c8c;box-sizing:border-box;border-radius:3px 3px 0 0}
.h{background:#262626;display:flex;align-items:center;justify-content:flex-end;flex:none;border-bottom:1px solid #1e1e1e;overflow:hidden;color:#a0a0a0}
.tabs{height:27px;display:flex;flex:none;background:#262626;border-bottom:1px solid #1e1e1e}
.body{flex:1;display:flex;flex-direction:column;min-height:0}
.foot{height:8px;border-top:2px solid #222;display:flex;justify-content:center;align-items:center;flex:none}`,
el => `<div class="h" style="height:${el.getAttribute('h')}px">${el.hasAttribute('plain') ? '' : I('dbll', 'margin-top:1px') + I('close', 'margin:2px -1px 0 -1px', 18)}</div><div class="tabs"><slot name="tabs"></slot></div><div class="body"><slot></slot></div><div class="foot"><ui-grip></ui-grip></div>`);
define('panel-tab', `:host{display:flex;align-items:center;border-right:1px solid #1e1e1e;height:26px;box-sizing:border-box;color:#8c8c8c;flex:none}:host([on]){background:#323232;color:#eee;height:27px;padding-bottom:1px}`, '<slot></slot>');
define('list-box', `:host{display:flex;border:1px solid #3f3f3f;box-sizing:border-box;align-items:flex-start;gap:1px;flex:none;color:#3c3c3c}.a{margin-left:auto;align-self:stretch;display:flex;flex-direction:column;justify-content:space-between;margin-right:-2px}`, `<slot></slot><div class="a">${I('chev', 'transform:scaleY(-1);margin-top:-4px', 18)}${I('chev', 'margin-bottom:-2px', 18)}</div>`);

define('color-body', `:host{display:flex;flex-direction:column;padding-left:6px}
.sp{width:215px;height:112px;border:1px solid #1b1b1b;margin-left:-.5px;background:linear-gradient(#fff,rgba(255,255,255,0) 50%,rgba(0,0,0,0) 50%,#000),linear-gradient(90deg,#f00,#ff0 17%,#0f0 33.300%,#0ff 50%,#00f 66.700%,#f0f 83.300%,#f00)}
.sw{display:flex;border:1px solid #1a1a1a;height:14px;gap:1px;background:#1a1a1a;margin-left:-1px}`,
`<div class="row" style="height:33px;align-items:center;padding-bottom:1px"><div class="sw"><none-swatch s="12"></none-swatch><div style="width:12px;background:#000"></div><div style="width:12px;background:#fff"></div></div><div style="margin-left:107px;width:10px">${L('#', 7)}</div><ui-field style="width:60px;height:21px;color:#c8c8c8">${L('000000', 31, 'margin-left:4px')}</ui-field></div><div class="sp"></div>`);
define('library-body', ':host{display:flex;flex-direction:column;padding:6px 5px 0;color:#b4b4b4}',
`<ui-field style="height:21px;width:220px">${I('search', 'margin-left:0')}</ui-field>
<list-box style="height:61px;width:220px;margin-top:5px"><div style="width:13px;height:13px;background:#fee8d3"></div><div style="width:13px;height:13px;background:#fdbf93"></div><div style="width:13px;height:13px;background:#de6b55"></div></list-box>
<div class="row" style="height:18px;flex:none">` + cells(1053, [[1055, I('lib', '', 18)], [1083.5, I('left', '', 19)], [1108, I('right', 'color:#5c5c5c', 19)], [1226.5, I('editx', '', 20)]], 1260) + '</div>');
define('swatches-body', `:host{display:flex;flex-direction:column;padding:6px 5px 0;color:#b4b4b4}
.vb{display:flex;width:49px;height:24px;border:1px solid #444;border-radius:3px;overflow:hidden;margin-top:-1px}.vb div{flex:1;display:flex;align-items:center;justify-content:center}.vb div+div{background:#1d1d1d}`,
`<div class="row" style="justify-content:space-between;height:35px;width:230px;align-items:flex-start"><fill-stroke style="margin-left:.5px"></fill-stroke><div class="vb"><div>${I('viewl', '', 18)}</div><div>${I('viewg', '', 18)}</div></div></div>
<list-box style="height:52px;width:230px"><none-swatch s="13"></none-swatch><svg width="13" height="13" style="background:#eee"><g fill="none" stroke="#333" stroke-width=".9"><circle cx="6.500" cy="6.500" r="4.600"/><circle cx="6.500" cy="6.500" r="2"/><path d="M6.500 0v13M0 6.500h13"/></g></svg></list-box>
<div class="row" style="height:19px;flex:none">` + cells(1392, [[1395, I('lib', '', 18)], [1421, I('kuler', '', 18)], [1448, I('addlib', 'color:#555', 18)], [1479.5, I('kinds', '', 18)], [1507, I('opts', 'color:#666', 18)], [1532, I('folder', '', 19)], [1559, I('page', '', 18)], [1584.5, I('trash', 'color:#555', 18)]], 1615) + '</div>');

const tile = svg => `<svg width="28" height="28" viewBox="0 0 28 28">${svg}</svg>`;
const APPS = [
  [`<ellipse cx="14" cy="14" rx="12" ry="12" fill="#6bb13c"/><path d="M2 16C3 6 12 1 20 3 14 5 6 8 2 16z" fill="#a5d27a"/><path d="M8.500 8v9c0 4 6.500 4 6.500 0V8M15 15c.5 4 3.500 4 5 2.500M10.500 18l1.500 7" fill="none" stroke="#fff" stroke-width="3.200"/>`, 0],
  [`<path d="M3 5l9-4 12 2.500-3 14-14 1z" fill="#c8161d"/><path d="M3 5l9-4 12 2.500-10 3z" fill="#e8484a"/><text x="3" y="16" font-size="11" font-weight="700" fill="#fff" textLength="21">SW</text><text x="8" y="27" font-size="7.500" font-weight="700" fill="#fff" textLength="18">2018</text>`, 0],
  [`<rect x="4.500" y="2" width="20" height="23" rx="3" fill="#061e2c" stroke="#31b4f5" stroke-width="1.500"/><text x="8.500" y="17.500" font-size="11.500" font-weight="600" fill="#eaf6ff" textLength="12">Ps</text>`, 1],
  [`<rect x="4" y="2.500" width="20" height="22.500" fill="#2a1200" stroke="#ff7f18" stroke-width="1.700"/><text x="8" y="18" font-size="13" fill="#ff8a1e" font-weight="600" textLength="12">Ai</text>`, 2],
  [`<path d="M4.500 5h18.500v11l-7.500 7.500h-11z" fill="#ffe60a"/><path d="M23 14v9.500h-9.500z" fill="#222"/><path d="M14 23.500v-9h9z" fill="#1a1a1a"/><path d="M14.500 23c.5-5 2-8 8.500-8.500z" fill="#fff3a0"/>`, 0],
  [`<circle cx="14" cy="14" r="12" fill="#1ed760"/><path d="M6.500 10.500c5-1.500 10.500-1 15 1.500M7.500 14.500c4-1 8.500-.7 12.500 1.500M8.500 18.300c3.500-.8 7-.5 10 1.200" fill="none" stroke="#0a0a0a" stroke-width="2.200" stroke-linecap="round"/>`, 1],
  [`<circle cx="14" cy="14" r="11.500" fill="#f0c419"/><path d="M14 14L4 8.200A11.500 11.500 0 0 1 24 8.500H14z" fill="#dd4b3e"/><path d="M4 8.200A11.500 11.500 0 0 0 13 25.500L18 17l-9-1z" fill="#2ea350"/><path d="M14 8.500h10A11.500 11.500 0 0 1 13 25.500l5.500-8z" fill="#fcc934"/><circle cx="14" cy="14" r="5.500" fill="#fff"/><circle cx="14" cy="14" r="4.300" fill="#4285f4"/>`, 1],
  [`<path d="M3.500 5V3h9v2H24v17.500H3.500z" fill="#ffd667"/><path d="M3.500 8H25v14.500H3.500z" fill="#ffe49c"/><path d="M7 24v-9h14v9h-3.500v-5h-7v5z" fill="#38a5e8"/>`, 1],
  [`<path d="M5 2h18v24H5z" fill="#fff"/><path d="M7 4h14v4H7z" fill="#0a0a0a"/><path d="M7.500 11.500h3M12.500 11.500h3M17.500 11.500h3M7.500 16h3M12.500 16h3M17.500 16h3M7.500 20.500h3M12.500 20.500h3M17.500 20.500h3" stroke="#0a0a0a" stroke-width="2.400"/>`, 0],
  [`<path d="M2 10.500L14 3l12 7.500z" fill="#1266b5"/><path d="M2 10h24v15H2z" fill="#2b9fe6"/><path d="M2 25V10l12 8z" fill="#3fb5f2"/><path d="M4 9.500h20L14 18z" fill="#f2f2f2"/><circle cx="26.500" cy="21.500" r="7.800" fill="#2a2e33" stroke="#888"/><text x="23.200" y="25.800" font-size="12" font-weight="600" fill="#fff">7</text>`, 0],
  [`<ellipse cx="12.500" cy="14" rx="11" ry="6" transform="rotate(-20 12.500 14)" fill="#777"/><ellipse cx="14" cy="10" rx="11" ry="6.300" transform="rotate(-20 14 10)" fill="#f5f5f5" stroke="#d8484a" stroke-width="1.500"/><path d="M8 7l13 11M15 4l2 13" stroke="#888" fill="none"/><path d="M14 16l10 1" stroke="#2a86c8" stroke-width="2"/><ellipse cx="18" cy="21" rx="2.200" ry="3.500" fill="none" stroke="#2278b5" stroke-width="1.700"/><ellipse cx="23" cy="18.500" rx="3" ry="2" transform="rotate(35 23 18.500)" fill="none" stroke="#2278b5" stroke-width="1.700"/>`, 0],
  [`<path d="M14 3h10v8H13zM5 14h9v7H4z" fill="#d8d8d8"/><path d="M15.500 4h7v5.500h-7zM6 15.500h7V20H6z" fill="#0a14d8"/><path d="M12 12h13l1-2v3l-2 1.500H12zM3 22.500h13l1-1v3H3z" fill="#c8c8c8"/><path d="M21 6l-5 5.500 3 1L8 19l3.500-5.500-2.500-1z" fill="#fff01e" stroke="#333" stroke-width=".4"/>`, 0],
  [`<path d="M3.500 3h21.500v20.500H3.500z" fill="#c80a0e" stroke="#9a1014"/><path d="M7.500 20c3-1.500 7.500-9.500 6-13.500-1.500-1-1.500 5 1.500 8.500 2.500 2.500 7 3.500 6 1.500-1-1.500-9-.5-13 2.500-1 1-1.500 1.300-.5 1z" fill="none" stroke="#fff" stroke-width="1.100"/>`, 1],
  ['', 0],
  [`<path d="M14 2c7 0 12 5 12 11.500S21 25 14 25c-1.500 0-3-.2-4-.6L6 26v-3.500C3.500 20.500 2 17.500 2 13.500 2 7 7 2 14 2z" fill="#1283ff"/><path d="M6.500 17l6-6.500 3.500 3 5.500-3-6 6.500-3.500-3z" fill="#fff" stroke="#fff"/>`, 0],
  [`<rect x="4" y="4" width="19" height="19" rx="3" fill="#7586c4"/><path d="M8 10c3-2 8-2 11 0 1 2 2 5 2 8-3 2-3 1-4-.5h-7C9 19 8 19 6 18c0-3 1-6 2-8z" fill="#eef"/><circle cx="11" cy="14" r="1.300" fill="#7586c4"/><circle cx="16" cy="14" r="1.300" fill="#7586c4"/><circle cx="20" cy="20" r="6.800" fill="#ef5350"/><circle cx="20" cy="20" r="3" fill="#fff"/>`, 1],
];
define('task-bar', `:host{display:flex;height:40px;background:#0a0908;color:#fff;font-size:12px;align-items:stretch}
.a{width:49px;display:flex;align-items:center;justify-content:center;flex:none;border-bottom:2px solid transparent}
.u{background:linear-gradient(#76b9ed,#76b9ed) 50% 38px/40px 2px no-repeat;background-origin:border-box;background-clip:border-box}
.on{background:linear-gradient(#76b9ed,#76b9ed) 0 38px/48px 2px no-repeat border-box,linear-gradient(#3d3b3a,#3d3b3a) 0 0/48px 40px no-repeat border-box}
text{font-family:"Open Sans",sans-serif}
.tm{display:flex;flex-direction:column;align-items:center;gap:4px;width:58px}`,
`<div class="a" style="width:48px"><svg width="16" height="16" fill="#fff" style="margin-top:1px"><path d="M0 2.300L6.500 1.400v6.200H0zM7.300 1.300L16 0v7.600H7.300zM0 8.400h6.500v6.200L0 13.700zM7.300 8.400H16V16l-8.700-1.200z"/></svg></div>
<div class="a"><svg width="17" height="16" fill="none" stroke="#fff" stroke-width="1.200" style="margin-top:1px"><path d="M.6 0v2.500h10V0M.6 16v-2.500h10V16M.6 4.500h10v6.500H.6zM15 0v2M15 6v10"/><path d="M13.500 3h3v2.500h-3z" fill="#fff" stroke="none"/></svg></div><div style="width:1.500px"></div>` +
APPS.map(([s, st]) => `<div class="a${st == 1 ? ' u' : st == 2 ? ' on' : ''}">${tile(s)}</div>`).join('') +
cells(882.5, [[1671, '<svg width="12" height="7" fill="none" stroke="#fff" stroke-width="1.400"><path d="M.5 6.500l5.500-5.500 5.500 5.500"/></svg>'],
[1693, '<svg width="17" height="13" fill="none" stroke="#fff" stroke-width="1.200"><path d="M5 3.500h10v8H4V8M15.500 6h1v3h-1"/><path d="M6.500 5h7v5h-7z" fill="#fff"/><path d="M1 1v3.500h3V1M2.500 4.500V8H6"/></svg>'],
[1717, '<svg width="17" height="14" fill="none" stroke="#fff" stroke-width="1.200"><path d="M1 4.500h2.500L7 1v12L3.500 9.500H1zM9.500 5c1 1 1 3 0 4"/><path d="M11.500 3c2 2 2 6 0 8M14 1c3 3 3 9 0 12" stroke="#888"/></svg>'],
[1744, '<svg width="14" height="14" fill="none" stroke="#ddd" stroke-width="1.200" style="margin-top:3px"><path d="M1 12C1 5 6 1.500 13 1.500M4 13c0-5 4-8 9-8M7 13.500c0-3 3-5 6-5M10 13.500c0-1 1.500-2 3-2"/><circle cx="12" cy="12.500" r="1.300" fill="#fff"/></svg>'],
[1767, L('ENG', 23)], [1803, `<div class="tm">${L('9:52 PM', 42)}${L('2020-06-12', 58)}</div>`],
[1879, '<svg width="17" height="17" fill="none" stroke="#fff" stroke-width="1.200"><path d="M.6 1h15.500v12h-5l-2.800 2.800L5.600 13h-5z"/></svg>'], [1915, '<div style="width:1px;height:40px;background:#666"></div>']], 1920));

define('ai-app', `:host{display:flex;flex-direction:column;width:1920px;height:1080px;background:#323232;position:relative;overflow:hidden}
.main{display:flex;height:975px;border-bottom:1px solid #1e1e1e}`,
`<menu-bar></menu-bar><control-bar></control-bar>
<div class="main"><tool-rail></tool-rail><doc-window></doc-window><icon-strip></icon-strip><props-panel></props-panel></div>
<task-bar></task-bar>
<float-panel h="12" style="left:558px;top:89px;width:240px;height:200px">
 <panel-tab slot="tabs" on style="width:50px">${I('updown', 'margin-left:-2px;color:#999')}${L('Color', 25, 'margin-left:-3px', 'b')}</panel-tab>
 <panel-tab slot="tabs" style="width:75px;padding-left:9px">${L('Color Guide', 56, '', 'b')}</panel-tab>
 <div slot="tabs" style="margin-left:auto;padding:3px 1px 0 0">${I('menu')}</div><color-body></color-body></float-panel>
<float-panel h="13" style="left:1047px;top:207px;width:232px;height:162px">
 <panel-tab slot="tabs" on style="width:54px;padding-left:9px;">${L('OrRd_3', 35, '', 'b')}</panel-tab>
 <div slot="tabs" style="margin-left:auto;padding:3px 1px 0 0">${I('menu')}</div><library-body></library-body></float-panel>
<float-panel h="2" plain style="left:1386px;top:75px;width:242px;height:151px;border-radius:0">
 <panel-tab slot="tabs" on style="width:62px;padding-left:9px">${L('Swatches', 44, '', 'b')}</panel-tab>
 <panel-tab slot="tabs" style="width:55px;padding-left:9px">${L('Brushes', 35, '', 'b')}</panel-tab>
 <panel-tab slot="tabs" style="width:59px;padding-left:9px">${L('Symbols', 39, '', 'b')}</panel-tab>
 <div slot="tabs" style="display:flex;align-items:center;margin-left:auto;color:#a0a0a0">${I('dblbig')}<div style="width:1px;height:11px;background:#666;margin:0 2px"></div>${I('menu', 'margin-right:1px')}</div><swatches-body></swatches-body></float-panel>`);
</script>
</body>
</html>
